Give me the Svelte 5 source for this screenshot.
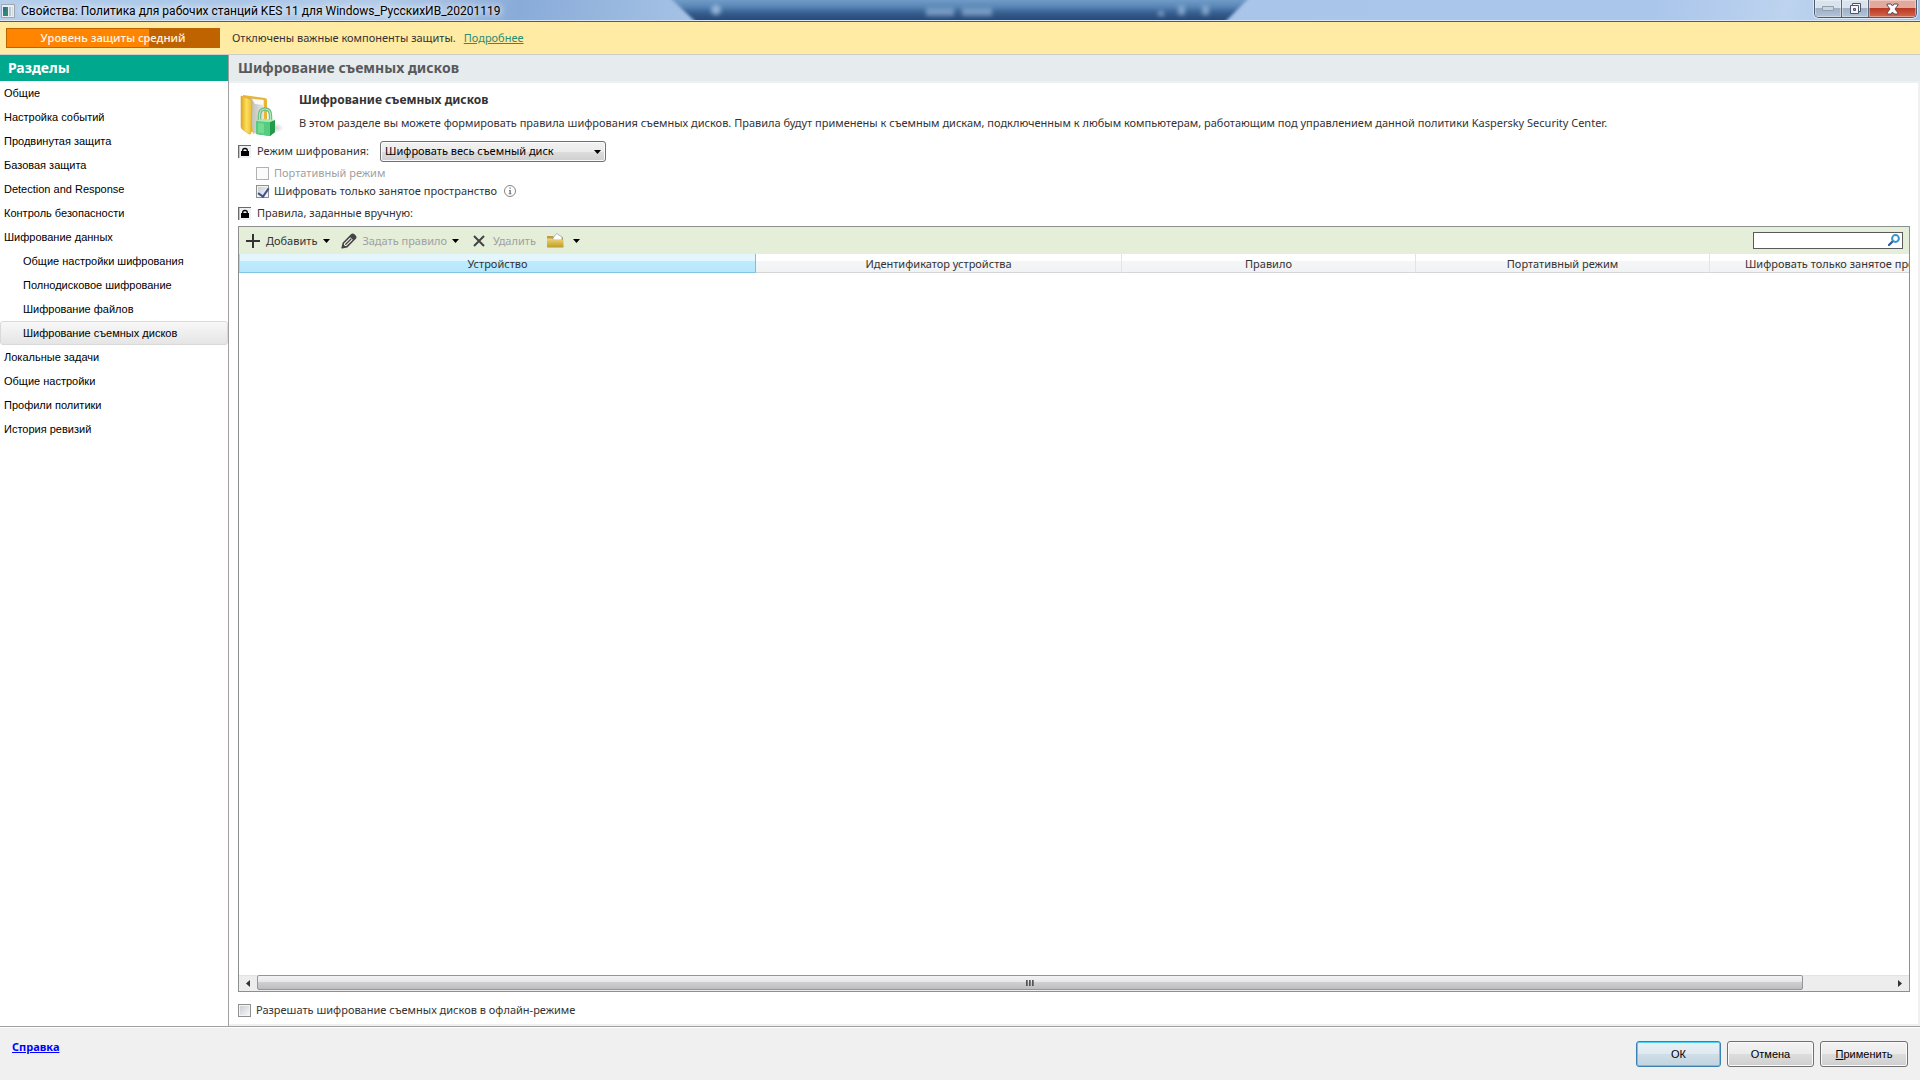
<script>
  const sections = [
    { label: 'Общие' },
    { label: 'Настройка событий' },
    { label: 'Продвинутая защита' },
    { label: 'Базовая защита' },
    { label: 'Detection and Response' },
    { label: 'Контроль безопасности' },
    { label: 'Шифрование данных' },
    { label: 'Общие настройки шифрования', child: true },
    { label: 'Полнодисковое шифрование', child: true },
    { label: 'Шифрование файлов', child: true },
    { label: 'Шифрование съемных дисков', child: true },
    { label: 'Локальные задачи' },
    { label: 'Общие настройки' },
    { label: 'Профили политики' },
    { label: 'История ревизий' }
  ];
  let current = $state('Шифрование съемных дисков');
  let occupiedOnly = $state(true);
  let offline = $state(false);
  let query = $state('');
</script>

{#snippet lock()}
  <button class="lock" type="button" aria-label="Заблокировать параметр">
    <svg viewBox="0 0 13 13" width="13" height="13" aria-hidden="true">
      <path d="M0 0h13v1H1v12H0z" fill="#6a6a6a" />
      <path d="M1 1h12v12H1z" fill="#eef0f1" />
      <path d="M1 1h1v12H1z" fill="#c4c4c4" />
      <path d="M4.700 7V5.500q0-2 2.300-2t2.300 2V7" fill="none" stroke="#000" stroke-width="1.300" />
      <path d="M3 6h8v5H3z" fill="#000" />
    </svg>
  </button>
{/snippet}

{#snippet caret()}
  <svg class="caret" viewBox="0 0 7 4" width="7" height="4" aria-hidden="true"><path d="M0 0h7L3.500 4z" fill="#000" /></svg>
{/snippet}

<div class="window">
  <header class="titlebar">
    <svg class="glass" viewBox="0 0 600 21" width="600" height="21" aria-hidden="true">
      <defs>
        <linearGradient id="deep" gradientUnits="userSpaceOnUse" x1="0" y1="0" x2="0" y2="20">
          <stop offset="0" stop-color="#739dcb" />
          <stop offset=".35" stop-color="#5b89b8" />
          <stop offset=".7" stop-color="#355d8f" />
          <stop offset="1" stop-color="#2a4b79" />
        </linearGradient>
        <filter id="soft" x="-5%" y="-20%" width="110%" height="140%"><feGaussianBlur stdDeviation="1.500" /></filter>
        <filter id="haze" x="-10%" y="-100%" width="120%" height="300%"><feGaussianBlur stdDeviation="2" /></filter>
      </defs>
      <path d="M-10 -20L39 26H562L608 -20z" fill="url(#deep)" filter="url(#soft)" />
      <g fill="#b4cfee" opacity=".7" filter="url(#haze)">
        <circle cx="56" cy="11" r="5" />
        <path d="M266 9h28v8h-28zM302 9h30v8h-30z" opacity=".7" />
        <path d="M498 12h6v5h-6zM518 7h7v9h-7zM542 7h7v9h-7z" opacity=".8" />
      </g>
    </svg>
    <svg class="appicon" viewBox="0 0 14 14" width="14" height="14" aria-hidden="true">
      <path d="M.5 .5h13v13H.5z" fill="#e9edf0" stroke="#9ba7b1" />
      <path d="M2 3h5v9H2z" fill="#2c8a72" /><path d="M2 3h3v4H2z" fill="#3a669d" />
      <path d="M8 3h2v9H8z" fill="#b9c7cf" /><path d="M11 3h1v9h-1z" fill="#d2d9de" />
    </svg>
    <h1>Свойства: Политика для рабочих станций KES 11 для Windows_РусскихИВ_20201119</h1>
    <div class="winbuttons">
      <button type="button" aria-label="Свернуть">
        <svg viewBox="0 0 12 5" width="12" height="5"><path d="M.5 .5h11v4H.5z" fill="#cbd5de" stroke="#919eac" /></svg>
      </button>
      <button type="button" aria-label="Восстановить">
        <svg viewBox="0 0 13 13" width="13" height="13">
          <path d="M3.500 1.500h8v8h-8z" fill="#f4f6f8" stroke="#50566a" />
          <path d="M1.500 3.500h8v8h-8z" fill="#f4f6f8" stroke="#50566a" />
          <path d="M4.500 6.500h2v2h-2z" fill="#a6b4c4" stroke="#50566a" />
        </svg>
      </button>
      <button class="close" type="button" aria-label="Закрыть">
        <svg viewBox="0 0 13 12" width="13" height="12">
          <path d="M1 1h4l1.500 2L8 1h4v1L9 6l3 4v1H8L6.500 9 5 11H1v-1l3-4-3-4z" fill="#fff" stroke="#574c5c" />
        </svg>
      </button>
    </div>
  </header>

  <div class="notice">
    <div class="level">Уровень защиты средний</div>
    <p>Отключены важные компоненты защиты.</p>
    <a href="#details">Подробнее</a>
  </div>

  <div class="body">
    <nav class="sidebar">
      <h2>Разделы</h2>
      <ul>
        {#each sections as s}
          <li>
            <button type="button" class:child={s.child} class:selected={s.label === current} onclick={() => (current = s.label)}>{s.label}</button>
          </li>
        {/each}
      </ul>
    </nav>

    <main>
      <h2 class="pagehead">Шифрование съемных дисков</h2>
      <div class="content">
        <div class="intro">
          <svg class="folder" viewBox="0 0 44 44" width="44" height="44" aria-hidden="true">
            <defs>
              <linearGradient id="fy" x1="0" x2="1"><stop offset="0" stop-color="#e0a91b" /><stop offset=".5" stop-color="#fbdf5e" /><stop offset="1" stop-color="#eeb92d" /></linearGradient>
              <linearGradient id="gp" x1="0" x2="1"><stop offset="0" stop-color="#b9b9b4" /><stop offset="1" stop-color="#e6e6e2" /></linearGradient>
              <linearGradient id="gl" x1="0" y1="0" x2="0" y2="1"><stop offset="0" stop-color="#8be0a0" /><stop offset="1" stop-color="#2faa58" /></linearGradient>
              <radialGradient id="sh"><stop offset="0" stop-color="#999" stop-opacity=".5" /><stop offset="1" stop-color="#999" stop-opacity="0" /></radialGradient>
            </defs>
            <ellipse cx="34" cy="34" rx="10" ry="5" fill="url(#sh)" />
            <path d="M3 1l22 3q2 .5 2 2v28l-12 5L3 35z" fill="#e9b535" />
            <path d="M9 4l15 2v30l-11 4z" fill="url(#gp)" />
            <path d="M12 5l11 1v5l-8-1z" fill="#fafaf8" />
            <path d="M1 2l9 3q2 1 2 4l-1 29q0 3-2 2l-7-5q-1-1-1-3z" fill="url(#fy)" stroke="#d49c1a" stroke-width=".5" />
            <path d="M19.500 27V22q0-7 5.500-7t5.500 7v5" fill="none" stroke="#6dbb80" stroke-width="3.500" />
            <path d="M19.500 27V22q0-7 5.500-7t5.500 7v5" fill="none" stroke="#b5e8c0" stroke-width="1.200" />
            <path d="M16 27l6-2 13 1v12l-5 4-14-2z" fill="url(#gl)" />
            <path d="M16 27l14 1v14l-14-2z" fill="#56cc7e" />
            <path d="M30 28l5-2v12l-5 4z" fill="#239b4d" />
            <path d="M16 27l6-2 13 1-5 2z" fill="#a8ebb8" />
            <path d="M18 29l6 .5v10l-6-1z" fill="#8be2a4" opacity=".6" />
          </svg>
          <div>
            <h3>Шифрование съемных дисков</h3>
            <p>В этом разделе вы можете формировать правила шифрования съемных дисков. Правила будут применены к съемным дискам, подключенным к любым компьютерам, работающим под управлением данной политики Kaspersky Security Center.</p>
          </div>
        </div>

        <div class="row mode">
          {@render lock()}
          <label for="mode">Режим шифрования:</label>
          <div class="selectbox">
            <select id="mode">
              <option>Шифровать весь съемный диск</option>
            </select>
            {@render caret()}
          </div>
        </div>
        <div class="row check">
          <label class="disabled"><input type="checkbox" disabled />Портативный режим</label>
        </div>
        <div class="row check">
          <label><input type="checkbox" bind:checked={occupiedOnly} />Шифровать только занятое пространство</label>
          <svg class="info" viewBox="0 0 12 12" width="12" height="12" aria-hidden="true">
            <circle cx="6" cy="6" r="5.500" fill="#fff" stroke="#777" stroke-width=".9" />
            <path d="M5.500 2.500h1.200v1.200H5.500zM5 5h1.700v3.500h.8v.8H4.700v-.8h.8V5.700H5z" fill="#666" />
          </svg>
        </div>
        <div class="row manual">
          {@render lock()}
          <span>Правила, заданные вручную:</span>
        </div>

        <section class="rules">
          <div class="toolbar">
            <button class="add" type="button">
              <svg viewBox="0 0 14 14" width="14" height="14" aria-hidden="true"><path d="M7 0v14M0 7h14" stroke="#333" stroke-width="2" /></svg>
              <span>Добавить</span>
              {@render caret()}
            </button>
            <button class="set" type="button">
              <svg viewBox="0 0 16 16" width="16" height="16" aria-hidden="true">
                <path d="M1.200 14.800L2.400 10 10.500 1.900q1.200-1.200 2.400 0l1.200 1.200q1.200 1.200 0 2.400L6 13.600z" fill="#f4f8ee" stroke="#444" stroke-width="1.600" stroke-linejoin="round" />
                <path d="M8.700 3.700l3.600 3.600 2-2q1-1 0-2l-1.600-1.600q-1-1-2 0z" fill="#444" />
                <path d="M4.300 11.700l6-6" stroke="#444" stroke-width="1.300" />
                <path d="M1 15l1-4 3 3z" fill="#444" />
              </svg>
              <span class="dim">Задать правило</span>
              {@render caret()}
            </button>
            <button class="remove" type="button" disabled>
              <svg viewBox="0 0 12 12" width="12" height="12" aria-hidden="true"><path d="M1 1l10 10M11 1L1 11" stroke="#444" stroke-width="2" /></svg>
              <span class="dim">Удалить</span>
            </button>
            <button class="more" type="button" aria-label="Импорт и экспорт">
              <svg viewBox="0 0 17 15" width="17" height="15" aria-hidden="true">
                <defs><linearGradient id="fo" x1="0" y1="0" x2="0" y2="1"><stop offset="0" stop-color="#eed678" /><stop offset="1" stop-color="#bd9d24" /></linearGradient></defs>
                <path d="M0 3h6l1 1h9v5H0z" fill="#b89e40" />
                <path d="M6 5l3.500-4.500L15 4v3H6z" fill="#fff" stroke="#9aa5b1" stroke-width=".8" />
                <path d="M0 5.500h5l2 1.500h9q.5 0 .5.500V14q0 .5-.5.500H.5Q0 14.500 0 14z" fill="url(#fo)" />
              </svg>
              {@render caret()}
            </button>
            <div class="search">
              <input type="text" aria-label="Поиск" bind:value={query} />
              <svg viewBox="0 0 12 12" width="12" height="12" aria-hidden="true">
                <path d="M1 11l3.800-3.800" stroke="#2c5aa0" stroke-width="2.200" stroke-linecap="round" />
                <circle cx="7.500" cy="4.500" r="3.400" fill="#fff" stroke="#3b93c9" stroke-width="2" />
              </svg>
            </div>
          </div>
          <div class="grid">
            <table>
              <colgroup><col class="c1" /><col class="c2" /><col class="c3" /><col class="c3" /><col class="c3" /></colgroup>
              <thead>
                <tr>
                  <th class="sorted">Устройство</th>
                  <th>Идентификатор устройства</th>
                  <th>Правило</th>
                  <th>Портативный режим</th>
                  <th>Шифровать только занятое пространство</th>
                </tr>
              </thead>
            </table>
          </div>
          <div class="scroll">
            <button type="button" aria-label="Прокрутить влево"><svg viewBox="0 0 4 7" width="4" height="7"><path d="M4 0v7L0 3.500z" fill="#333" /></svg></button>
            <div class="track">
              <div class="thumb"><svg viewBox="0 0 8 6" width="8" height="6"><path d="M0 0h1.700v6H0zM3 0h1.700v6H3zM6 0h1.700v6H6z" fill="#555" /></svg></div>
            </div>
            <button type="button" aria-label="Прокрутить вправо"><svg viewBox="0 0 4 7" width="4" height="7"><path d="M0 0v7l4-3.500z" fill="#333" /></svg></button>
          </div>
        </section>

        <div class="row offline">
          <label><input type="checkbox" bind:checked={offline} />Разрешать шифрование съемных дисков в офлайн-режиме</label>
        </div>
      </div>
    </main>
  </div>

  <footer>
    <a href="#help">Справка</a>
    <div class="actions">
      <button class="ok" type="button">ОК</button>
      <button type="button">Отмена</button>
      <button class="apply" type="button"><span><u>П</u>рименить</span></button>
    </div>
  </footer>
</div>

<style>
  :global(body) {
    margin: 0;
  }
  .window {
    --ui: 'Noto Sans', 'Open Sans', sans-serif;
    --sys: 'Liberation Sans', Arial, sans-serif;
    display: flex;
    flex-direction: column;
    min-height: 100vh;
    box-sizing: border-box;
    background: #f0f0f0;
    color: #333;
    font: 11px/18px var(--ui);
  }
  .window :global(*) {
    box-sizing: border-box;
  }
  h1, h2, h3, p, ul {
    margin: 0;
    padding: 0;
  }
  button, input, select {
    margin: 0;
    padding: 0;
    font: inherit;
    color: inherit;
  }
  button {
    border: 0;
    background: none;
  }
  svg {
    display: block;
    flex: none;
  }

  .titlebar {
    position: relative;
    display: flex;
    align-items: center;
    height: 22px;
    overflow: hidden;
    background: linear-gradient(100deg, #b4cdea 0, #a9c6e8 12%, #b3cbe8 20%, #89abd8 27%, #a5c2e5 36%, #a9c5ea 64%, #abc6eb 86%, #bdd3ef 93%, #a3c0e6);
    border-bottom: 1px solid #4d5a70;
    box-shadow: inset 0 -1px #dbe7f5;
  }
  .glass {
    position: absolute;
    top: -1px;
    left: calc(50% - 300px);
  }
  .appicon {
    margin-left: 1px;
  }
  h1 {
    margin-left: 6px;
    font: 12px/20px Roboto, var(--ui);
    color: #000;
    white-space: nowrap;
    text-shadow: 0 0 6px #fff, 0 0 8px #fff;
  }
  .winbuttons {
    position: relative;
    display: flex;
    align-self: flex-start;
    height: 18px;
    margin: 0 3px 0 auto;
    border: 1px solid #4e5a6b;
    border-top: 0;
    border-radius: 0 0 5px 5px;
    overflow: hidden;
    box-shadow: 0 0 0 1px #dce9f6;
  }
  .winbuttons button {
    display: grid;
    place-items: center;
    width: 27px;
    border-right: 1px solid #5a6678;
    background: linear-gradient(#d9e3ed 0 45%, #9fb0c5 50%, #b2c4d9);
    box-shadow: inset 0 0 0 1px #ffffff60;
  }
  .winbuttons .close {
    width: 47px;
    border: 0;
    background: linear-gradient(#e3a99d 0 45%, #b93a25 50%, #d5664c);
  }

  .notice {
    display: flex;
    align-items: center;
    height: 33px;
    padding-left: 6px;
    background: #ffeba3;
    border-bottom: 1px solid #cccdca;
  }
  .level {
    width: 214px;
    height: 20px;
    border: 1px solid #bf6200;
    background: linear-gradient(90deg, #ff8400 67%, #bf6200 67%);
    color: #fff3e2;
    font: 600 11px/17px 'Open Sans', var(--ui);
    text-align: center;
  }
  .notice p {
    margin-left: 12px;
  }
  .notice a {
    margin-left: 8px;
    color: #2f8b72;
  }

  .body {
    flex: 1;
    display: flex;
  }
  .sidebar {
    width: 229px;
    flex: none;
    background: #fff;
    border-right: 1px solid #a0a0a0;
  }
  .sidebar h2 {
    height: 26px;
    padding-left: 8px;
    background: #00a88e;
    color: #fff;
    font: 700 14px/26px var(--ui);
  }
  ul {
    list-style: none;
  }
  li button {
    display: block;
    width: 100%;
    height: 24px;
    padding: 0 3px;
    border: 1px solid transparent;
    border-radius: 3px;
    text-align: left;
    color: #000;
    font: 11px/22px var(--sys);
  }
  li .child {
    padding-left: 22px;
  }
  li .selected {
    border-color: #d9d9d9;
    background: linear-gradient(#f8f8f8, #e5e5e5);
  }

  main {
    flex: 1;
    min-width: 0;
    display: flex;
    flex-direction: column;
    padding: 0 2px 2px 0;
  }
  .pagehead {
    height: 28px;
    margin-right: -2px;
    padding-left: 9px;
    background: #e6ebee;
    border-bottom: 2px solid #eef1f1;
    color: #58595b;
    font: 700 14px/26px var(--ui);
  }
  .content {
    flex: 1;
    display: flex;
    flex-direction: column;
    min-width: 0;
    padding: 8px 8px 5px 9px;
    background: #fff;
  }
  .intro {
    display: flex;
    height: 48px;
    gap: 15px;
  }
  .folder {
    margin: 3px 0 0 2px;
  }
  h3 {
    font: 700 12px/18px var(--ui);
  }
  .intro p {
    padding-top: 5px;
  }
  .row {
    display: flex;
    align-items: center;
    height: 18px;
  }
  .mode {
    height: 25px;
    padding-bottom: 1px;
  }
  .lock {
    width: 13px;
    height: 13px;
    margin-right: 6px;
  }
  .selectbox {
    position: relative;
    width: 226px;
    margin-left: 11px;
  }
  select {
    display: block;
    width: 100%;
    height: 21px;
    padding-left: 4px;
    appearance: none;
    border: 1px solid #707070;
    border-radius: 3px;
    background: linear-gradient(#f2f2f2, #ebebeb 50%, #dddddd 50%, #cfcfcf);
    box-shadow: inset 0 0 0 1px #fafafa;
    color: #000;
  }
  .selectbox .caret {
    position: absolute;
    right: 5px;
    top: 9px;
  }
  .check {
    padding-left: 18px;
  }
  label {
    display: flex;
    align-items: center;
  }
  .disabled, .dim {
    color: #a0a0a0;
  }
  input[type='checkbox'] {
    appearance: none;
    width: 13px;
    height: 13px;
    margin-right: 5px;
    border: 1px solid #8e8f8f;
    background: linear-gradient(135deg, #cbcfd5, #f6f6f6) center / 9px 9px no-repeat #f4f4f4;
  }
  input[type='checkbox']:disabled {
    border-color: #b1b1b1;
    background: #fbfbfb;
  }
  input[type='checkbox']:checked::after {
    content: '';
    display: block;
    width: 5px;
    height: 9px;
    margin: 0 0 0 3px;
    border: solid #3d5591;
    border-width: 0 2px 2px 0;
    transform: rotate(35deg);
  }
  .info {
    margin-left: 7px;
  }
  .manual {
    height: 26px;
  }

  .rules {
    flex: 1;
    display: flex;
    flex-direction: column;
    min-width: 0;
    border: 1px solid #8c8f8f;
  }
  .toolbar {
    display: flex;
    align-items: center;
    height: 27px;
    padding: 0 6px 0 7px;
    background: #e4eed9;
  }
  .toolbar button {
    display: flex;
    align-items: center;
    height: 22px;
  }
  .add {
    gap: 6px;
    margin-right: 11px;
  }
  .set {
    gap: 5px;
    margin-right: 14px;
  }
  .remove {
    gap: 8px;
    margin-right: 11px;
  }
  .more {
    gap: 9px;
  }
  .search {
    position: relative;
    width: 150px;
    margin-left: auto;
  }
  .search input {
    display: block;
    width: 100%;
    height: 17px;
    padding: 0 20px 0 4px;
    border: 1px solid #5a5a5a;
    background: #fff;
  }
  .search svg {
    position: absolute;
    right: 3px;
    top: 2px;
  }
  .grid {
    flex: 1;
    overflow: hidden;
  }
  table {
    width: 1765px;
    table-layout: fixed;
    border-collapse: separate;
    border-spacing: 0;
  }
  .c1 { width: 517px; }
  .c2 { width: 366px; }
  .c3 { width: 294px; }
  th {
    height: 19px;
    padding: 2px 0 0;
    border-right: 1px solid #e3e4e6;
    border-bottom: 1px solid #d5d5d5;
    background: linear-gradient(#fff 40%, #f5f6f8 40%, #f1f2f4);
    font-weight: 400;
    line-height: 16px;
    text-align: center;
    white-space: nowrap;
  }
  .sorted {
    border-left: 1px solid #96d9f9;
    border-right-color: #6fc3ea;
    border-bottom-color: #83c4e4;
    background: linear-gradient(#e3f6fe 40%, #bdecff 40%, #b7e7fb);
  }
  .scroll {
    display: flex;
    height: 16px;
    border-top: 1px solid #e3e3e3;
    background: #ededed;
  }
  .scroll button {
    display: grid;
    place-items: center;
    width: 18px;
    height: 14px;
  }
  .track {
    flex: 1;
    margin-top: -1px;
  }
  .thumb {
    display: grid;
    place-items: center;
    width: 94.6%;
    height: 15px;
    border: 1px solid #959595;
    border-radius: 2px;
    background: linear-gradient(#f3f3f3, #e6e6e7 48%, #cfcfd1 50%, #bdbdc0);
  }
  .offline {
    margin-top: 9px;
  }

  footer {
    display: flex;
    justify-content: space-between;
    height: 54px;
    padding: 14px 12px 0 12px;
    border-top: 1px solid #a0a0a0;
    box-shadow: inset 0 1px #fff;
  }
  footer a {
    height: 18px;
    margin-top: -3px;
    color: #00f;
    font-weight: 700;
  }
  .actions {
    display: flex;
    gap: 6px;
  }
  .actions button {
    width: 87px;
    height: 26px;
    border: 1px solid #707070;
    border-radius: 3px;
    background: linear-gradient(#f2f2f2, #ebebeb 50%, #dddddd 50%, #cfcfcf);
    box-shadow: inset 0 0 0 1px #fafafa;
    color: #000;
    font: 11px/22px var(--sys);
  }
  .actions .apply {
    width: 88px;
  }
  .actions .ok {
    width: 85px;
    border-color: #3c7fb1;
    background: linear-gradient(#eaf1f5, #dee9f0 50%, #cfdee7 50%, #c3d4df);
    box-shadow: inset 0 0 0 1px #48d3f7;
  }
</style>
